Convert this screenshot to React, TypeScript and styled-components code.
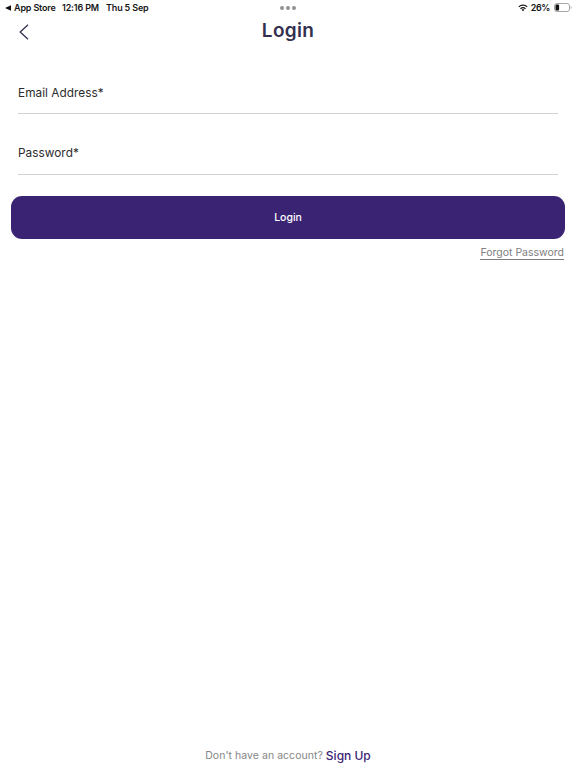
import React from 'react';
import styled, { createGlobalStyle } from 'styled-components';

const App: React.FC = () => {
  return (
    <Screen>
      <GlobalStyle />
      <StatusBar>
        <StatusLeft>
          <BackTriangle viewBox="0 0 6 6">
            <path d="M0 3L6 0.2V5.8Z" fill="#111" />
          </BackTriangle>
          <AppName>App Store</AppName>
          <Clock>12:16 PM</Clock>
          <Day>Thu 5 Sep</Day>
        </StatusLeft>
        <Dots>
          <Dot />
          <Dot />
          <Dot />
        </Dots>
        <StatusRight>
          <Wifi viewBox="0 0 20 15">
            <path d="M1.5 5.2C6.2 0.9 13.8 0.9 18.5 5.2" />
            <path d="M5 9.1C7.8 6.6 12.2 6.6 15 9.1" />
            <path d="M7.2 11.2C8.8 9.9 11.2 9.9 12.8 11.2L10 14Z" fill="#111" stroke="none" />
          </Wifi>
          <Percent>26%</Percent>
          <Battery viewBox="0 0 18 9">
            <rect x="0.5" y="0.5" width="15" height="8" rx="2.4" fill="none" stroke="#a5a5a5" />
            <rect x="1.5" y="1.5" width="3.6" height="6" rx="1" fill="#111" />
            <path d="M16.6 3V6C17.8 5.5 17.8 3.5 16.6 3Z" fill="#a5a5a5" />
          </Battery>
        </StatusRight>
      </StatusBar>
      <Header>
        <BackButton aria-label="Back">
          <svg width="10" height="16" viewBox="0 0 10 16">
            <path d="M9 0.8L1.2 8L9 15.2" fill="none" stroke="#33304f" strokeWidth="1.3" />
          </svg>
        </BackButton>
        <Title>Login</Title>
      </Header>
      <Form>
        <Field>
          <Label>Email Address*</Label>
        </Field>
        <Field>
          <Label>Password*</Label>
        </Field>
      </Form>
      <LoginButton>Login</LoginButton>
      <Forgot>Forgot Password</Forgot>
      <Footer>
        <Question>Don't have an account?</Question>
        <SignUp>Sign Up</SignUp>
      </Footer>
    </Screen>
  );
};

export default App;

const GlobalStyle = createGlobalStyle`
  * {
    box-sizing: border-box;
  }
  body {
    margin: 0;
    background: #fff;
    font-family: Inter, 'Liberation Sans', sans-serif;
  }
`;

const Screen = styled.div`
  display: flex;
  flex-direction: column;
  height: 768px;
  overflow: hidden;
  background: #fff;
`;

const StatusBar = styled.div`
  display: grid;
  grid-template-columns: 1fr auto 1fr;
  align-items: center;
  height: 15px;
  padding: 0 4px 0 5px;
  color: #161616;
  font-size: 9px;
  font-weight: 600;
  line-height: 15px;
  white-space: nowrap;
`;

const StatusLeft = styled.div`
  display: flex;
  align-items: center;
  letter-spacing: -0.16px;
`;

const BackTriangle = styled.svg`
  width: 6px;
  height: 6px;
  margin-right: 3px;
`;

const AppName = styled.span`
  width: 48px;
`;

const Clock = styled.span`
  width: 44px;
`;

const Day = styled.span``;

const Dots = styled.div`
  display: flex;
  gap: 2px;
  margin-right: 1px;
`;

const Dot = styled.span`
  width: 4px;
  height: 4px;
  border-radius: 50%;
  background: #929292;
`;

const StatusRight = styled.div`
  display: flex;
  align-items: center;
  justify-content: flex-end;
`;

const Wifi = styled.svg`
  width: 10px;
  height: 8px;
  margin-right: 3px;
  fill: none;
  stroke: #111;
  stroke-width: 2.5;
`;

const Percent = styled.span`
  margin-right: 4px;
  letter-spacing: -0.4px;
`;

const Battery = styled.svg`
  width: 18px;
  height: 9px;
`;

const Header = styled.header`
  display: grid;
  grid-template-columns: 48px 1fr 48px;
  align-items: center;
  height: 33px;
`;

const BackButton = styled.button`
  display: flex;
  padding: 0 0 0 19px;
  border: 0;
  background: none;
`;

const Title = styled.h1`
  margin: 0 0 1px;
  color: #33304f;
  font-size: 19px;
  font-weight: 600;
  letter-spacing: 0.3px;
  line-height: 24px;
  text-align: center;
`;

const Form = styled.div`
  display: flex;
  flex-direction: column;
  padding: 24px 18px 0;
`;

const Field = styled.div`
  height: 42px;
  padding-top: 12px;
  border-bottom: 1px solid #d2d2d2;

  & + & {
    height: 61px;
    padding-top: 30px;
  }
`;

const Label = styled.label`
  display: block;
  color: #2b2b2b;
  font-size: 11.8px;
  line-height: 18px;
  letter-spacing: 0.04px;
`;

const LoginButton = styled.button`
  flex: none;
  height: 43px;
  margin: 20.5px 11px 0;
  padding: 0;
  border: 0;
  border-radius: 11px;
  background: #3b2374;
  color: #fff;
  font-family: inherit;
  font-size: 10.5px;
  font-weight: 500;
`;

const Forgot = styled.a`
  align-self: flex-end;
  height: 14px;
  margin: 7px 12px 0 0;
  border-bottom: 1px solid #808080;
  color: #808080;
  font-size: 10.5px;
  line-height: 14px;
`;

const Footer = styled.footer`
  display: flex;
  align-items: center;
  justify-content: center;
  gap: 3px;
  height: 20px;
  margin-top: auto;
  margin-bottom: 3px;
`;

const Question = styled.span`
  color: #868686;
  font-size: 10.5px;
  letter-spacing: 0.04px;
`;

const SignUp = styled.a`
  color: #3b2374;
  font-size: 12px;
  font-weight: 500;
`;
